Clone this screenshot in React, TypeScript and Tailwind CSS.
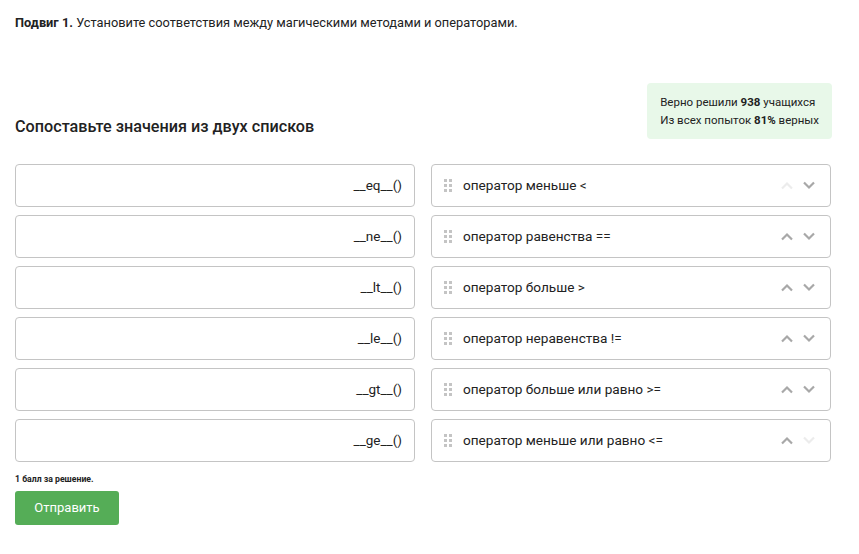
import { JSX } from "react/jsx-runtime";

const methods = ["__eq__()", "__ne__()", "__lt__()", "__le__()", "__gt__()", "__ge__()"];
const operators = [
  "оператор меньше <",
  "оператор равенства ==",
  "оператор больше >",
  "оператор неравенства !=",
  "оператор больше или равно >=",
  "оператор меньше или равно <=",
];

const Grip = () => (
  <svg width="8" height="14" viewBox="0 0 8 14" className="shrink-0">
    {[0, 5, 10].map((y) =>
      [0, 5].map((x) => <rect key={`${x}-${y}`} x={x} y={y} width="3" height="3" fill="#c4c4c4" />)
    )}
  </svg>
);

const Chevron = ({ up, faded }: { up?: boolean; faded?: boolean }) => (
  <svg width="14" height="9" viewBox="0 0 14 9">
    <path
      d={up ? "M2 7.5 L7 2.5 L12 7.5" : "M2 1.5 L7 6.5 L12 1.5"}
      fill="none"
      stroke={faded ? "#ececec" : "#a8a8a8"}
      strokeWidth="2.2"
    />
  </svg>
);

const App = (): JSX.Element => {
  return (
    <div className="min-h-[554px] bg-white px-[15px] pt-[15px] text-[#222] font-['Roboto',sans-serif]">
      <p className="text-[12.8px] leading-[16px]">
        <b className="font-bold">Подвиг 1.</b> Установите соответствия между магическими методами и операторами.
      </p>

      <div className="mt-[52px] flex items-end justify-between pr-[12px]">
        <h2 className="mb-[2px] text-[16.2px] font-medium leading-[20px]">Сопоставьте значения из двух списков</h2>
        <div className="rounded-[4px] bg-[#e8f8e9] px-[13px] py-[10px] text-[11.5px] leading-[18px]">
          <div>
            Верно решили <b className="font-bold">938</b> учащихся
          </div>
          <div>
            Из всех попыток <b className="font-bold">81%</b> верных
          </div>
        </div>
      </div>

      <div className="mt-[25px] flex gap-[16px] pr-[12px]">
        <div className="flex w-[400px] flex-col gap-[8px]">
          {methods.map((m) => (
            <div
              key={m}
              className="flex h-[43px] items-center justify-end rounded-[4px] border border-[#c4c4c4] pr-[12px] text-[13.5px]"
            >
              {m}
            </div>
          ))}
        </div>
        <div className="flex w-[400px] flex-col gap-[8px]">
          {operators.map((o, i) => (
            <div
              key={o}
              className="flex h-[43px] items-center rounded-[4px] border border-[#c4c4c4] pl-[12px] pr-[14px] text-[13.6px]"
            >
              <Grip />
              <span className="ml-[11px] flex-1">{o}</span>
              <div className="flex items-center gap-[8px]">
                <Chevron up faded={i === 0} />
                <Chevron faded={i === operators.length - 1} />
              </div>
            </div>
          ))}
        </div>
      </div>

      <p className="mt-[11px] text-[8.7px] font-bold leading-[12px]">1 балл за решение.</p>
      <button className="mt-[6px] h-[34px] w-[104px] rounded-[3px] bg-[#55ad57] text-[13px] text-white">
        Отправить
      </button>
    </div>
  );
};

export default App;
